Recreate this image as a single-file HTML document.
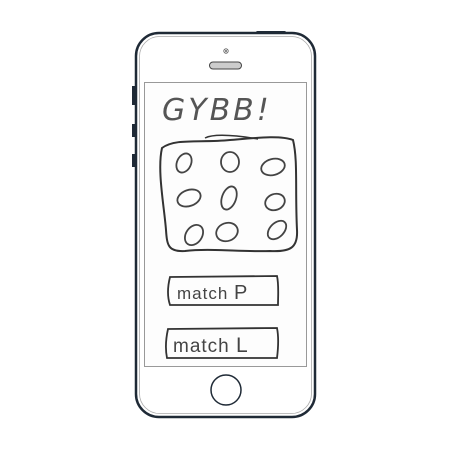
<!DOCTYPE html><html><head><style>body{margin:0;background:#fff}svg{display:block}text{font-family:"Liberation Sans",sans-serif}</style></head><body>
<svg width="450" height="450" viewBox="0 0 450 450" xmlns="http://www.w3.org/2000/svg">
<rect x="256" y="31" width="30" height="4" rx="1.5" fill="#1f2a36"/>
<rect x="132" y="86" width="4" height="19" fill="#1f2a36"/>
<rect x="132" y="124" width="4" height="13" fill="#1f2a36"/>
<rect x="132" y="154" width="4" height="13" fill="#1f2a36"/>
<rect x="136" y="33" width="179" height="384" rx="23" fill="#fff" stroke="#1f2a36" stroke-width="2.5"/>
<rect x="139.5" y="36.5" width="172" height="377" rx="20" fill="none" stroke="#aaa" stroke-width="0.8"/>
<rect x="144.5" y="82.5" width="162" height="284" fill="#fdfdfd" stroke="#999" stroke-width="1"/>
<circle cx="226" cy="51" r="2.2" fill="#fff" stroke="#555" stroke-width="0.8"/><circle cx="226" cy="51" r="0.9" fill="#333"/>
<rect x="209.5" y="62" width="32" height="7" rx="3.5" fill="#ccc" stroke="#444" stroke-width="1"/>
<circle cx="226" cy="390" r="15" fill="#fff" stroke="#1f2a36" stroke-width="1.5"/>
<text x="162" y="120" font-size="30" fill="#555" font-style="italic" letter-spacing="3" font-weight="normal" style="font-family:'DejaVu Sans',sans-serif;font-weight:200">GYBB!</text>
<path d="M162 148 C175 138 200 143 230 140 C255 138 280 135 293 140 C298 160 295 190 297 230 C298 248 290 252 270 251 C240 252 210 248 185 251 C168 252 167 245 166 230 C164 205 157 170 162 148 Z" fill="none" stroke="#333" stroke-width="2"/>
<path d="M205 138 C215 133 240 136 258 139" fill="none" stroke="#333" stroke-width="1.5"/>
<g fill="none" stroke="#444" stroke-width="1.8">
<ellipse cx="184" cy="163" rx="7" ry="10" transform="rotate(25 184 163)"/>
<ellipse cx="230" cy="162" rx="9" ry="10"/>
<ellipse cx="273" cy="167" rx="12" ry="8" transform="rotate(-15 273 167)"/>
<ellipse cx="189" cy="198" rx="12" ry="8" transform="rotate(-20 189 198)"/>
<ellipse cx="229" cy="198" rx="7" ry="12" transform="rotate(20 229 198)"/>
<ellipse cx="275" cy="202" rx="10" ry="8" transform="rotate(-20 275 202)"/>
<ellipse cx="194" cy="235" rx="8" ry="11" transform="rotate(35 194 235)"/>
<ellipse cx="227" cy="232" rx="11" ry="9" transform="rotate(-20 227 232)"/>
<ellipse cx="277" cy="230" rx="7" ry="11" transform="rotate(45 277 230)"/>
</g>
<path d="M170 277 L277 276 C279 285 278 296 278 305 L170 305 C167 296 168 285 170 277 Z" fill="none" stroke="#333" stroke-width="1.8"/>
<path d="M168 329 L277 328 C279 338 278 350 277 358 L167 358 C165 348 166 338 168 329 Z" fill="none" stroke="#333" stroke-width="1.8"/>
<text x="177" y="299" font-size="17" fill="#444" letter-spacing="1">match <tspan font-size="20">P</tspan></text>
<text x="173" y="352" font-size="19" fill="#444" letter-spacing="1">match <tspan font-size="21">L</tspan></text>
</svg></body></html>
